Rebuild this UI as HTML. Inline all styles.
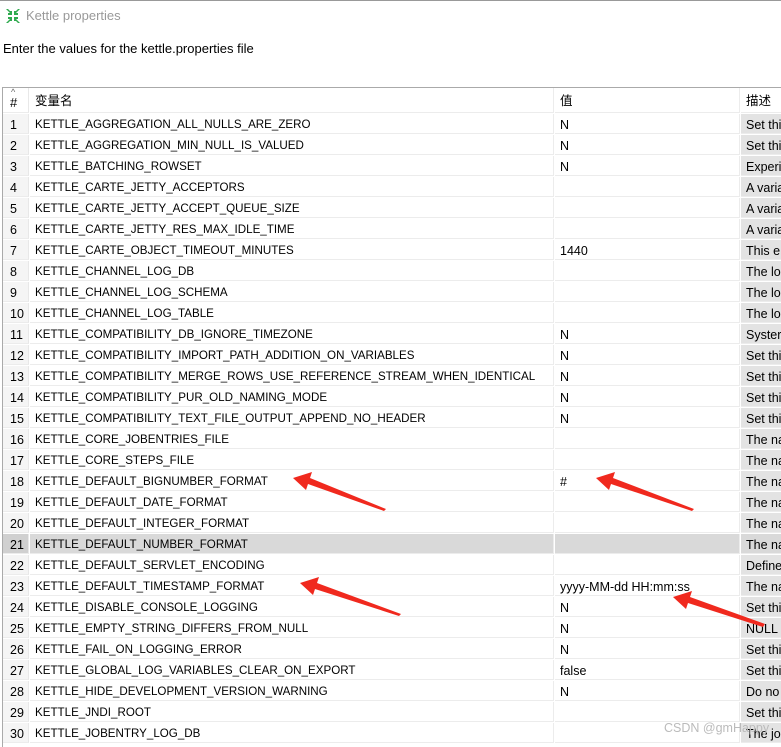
<!DOCTYPE html>
<html><head><meta charset="utf-8"><style>
body{margin:0;width:781px;height:746px;overflow:hidden;background:#fff;font-family:"Liberation Sans","Noto Sans CJK SC",sans-serif;position:relative}
.topline{position:absolute;left:0;top:0;width:781px;height:1px;background:#999}
.title{position:absolute;left:26px;top:8px;font-size:13px;color:#999}
.ico{position:absolute;left:5px;top:8px}
.sub{position:absolute;left:3px;top:41px;font-size:13px;color:#000}
.tbl{position:absolute;left:2px;top:87px;width:779px;height:659px;border-left:1px solid #aaa;border-top:1px solid #aaa;overflow:hidden}
.r{position:absolute;left:0;height:21px;width:779px;font-size:11.6px;line-height:22px;color:#000;white-space:nowrap}
.r div{position:absolute;top:0;height:20px;border-bottom:1px solid #ececec;overflow:hidden}
.c0{left:0;width:26px;background:#f5f5f5;border-right:1px solid #e8e8e8;padding-left:7px;box-sizing:border-box;font-size:12.5px}
.c1{left:27px;width:524px;padding-left:5px;box-sizing:border-box;border-right:1px solid #ececec}
.c2{left:552px;width:185px;padding-left:5px;box-sizing:border-box;border-right:1px solid #ececec;font-size:12.5px}
.c3{left:738px;width:50px;padding-left:5px;box-sizing:border-box;background:#e3e3e3;font-size:12.5px}
.sel div{background:#d9d9d9!important}
.sel .c0{background:#d0d0d0!important}
.wm{position:absolute;left:664px;top:721px;font-size:12.5px;color:#bbb}
</style></head><body>
<div class="topline"></div>
<svg class="ico" width="16" height="16" viewBox="0 0 16 16"><g fill="#2eaa4e"><path d="M1 1h2l4 4-2 0z"/><path d="M15 1h-2l-4 4 2 0z"/><path d="M1 15h2l4-4-2 0z"/><path d="M15 15h-2l-4-4 2 0z"/><rect x="5" y="3" width="2" height="4"/><rect x="3" y="5" width="4" height="2"/><rect x="9" y="3" width="2" height="4"/><rect x="9" y="5" width="4" height="2"/><rect x="5" y="9" width="2" height="4"/><rect x="3" y="9" width="4" height="2"/><rect x="9" y="9" width="2" height="4"/><rect x="9" y="9" width="4" height="2"/></g></svg>
<div class="title">Kettle properties</div>
<div class="sub">Enter the values for the kettle.properties file</div>
<div class="tbl">
<div class="r" style="top:0;height:26px;line-height:26px;font-size:12.5px"><div class="c0" style="height:25px;background:#fff;font-size:13px;padding-top:2px">#<span style="position:absolute;left:8px;top:-9px;font-size:9px;color:#666">^</span></div><div class="c1" style="height:25px;font-size:12.5px">变量名</div><div class="c2" style="height:25px">值</div><div class="c3" style="height:25px;background:#fff">描述</div></div>
<div class="r" style="top:26px"><div class="c0">1</div><div class="c1">KETTLE_AGGREGATION_ALL_NULLS_ARE_ZERO</div><div class="c2">N</div><div class="c3">Set thi</div></div>
<div class="r" style="top:47px"><div class="c0">2</div><div class="c1">KETTLE_AGGREGATION_MIN_NULL_IS_VALUED</div><div class="c2">N</div><div class="c3">Set thi</div></div>
<div class="r" style="top:68px"><div class="c0">3</div><div class="c1">KETTLE_BATCHING_ROWSET</div><div class="c2">N</div><div class="c3">Experi</div></div>
<div class="r" style="top:89px"><div class="c0">4</div><div class="c1">KETTLE_CARTE_JETTY_ACCEPTORS</div><div class="c2"></div><div class="c3">A varia</div></div>
<div class="r" style="top:110px"><div class="c0">5</div><div class="c1">KETTLE_CARTE_JETTY_ACCEPT_QUEUE_SIZE</div><div class="c2"></div><div class="c3">A varia</div></div>
<div class="r" style="top:131px"><div class="c0">6</div><div class="c1">KETTLE_CARTE_JETTY_RES_MAX_IDLE_TIME</div><div class="c2"></div><div class="c3">A varia</div></div>
<div class="r" style="top:152px"><div class="c0">7</div><div class="c1">KETTLE_CARTE_OBJECT_TIMEOUT_MINUTES</div><div class="c2">1440</div><div class="c3">This e</div></div>
<div class="r" style="top:173px"><div class="c0">8</div><div class="c1">KETTLE_CHANNEL_LOG_DB</div><div class="c2"></div><div class="c3">The lo</div></div>
<div class="r" style="top:194px"><div class="c0">9</div><div class="c1">KETTLE_CHANNEL_LOG_SCHEMA</div><div class="c2"></div><div class="c3">The lo</div></div>
<div class="r" style="top:215px"><div class="c0">10</div><div class="c1">KETTLE_CHANNEL_LOG_TABLE</div><div class="c2"></div><div class="c3">The lo</div></div>
<div class="r" style="top:236px"><div class="c0">11</div><div class="c1">KETTLE_COMPATIBILITY_DB_IGNORE_TIMEZONE</div><div class="c2">N</div><div class="c3">Syster</div></div>
<div class="r" style="top:257px"><div class="c0">12</div><div class="c1">KETTLE_COMPATIBILITY_IMPORT_PATH_ADDITION_ON_VARIABLES</div><div class="c2">N</div><div class="c3">Set thi</div></div>
<div class="r" style="top:278px"><div class="c0">13</div><div class="c1">KETTLE_COMPATIBILITY_MERGE_ROWS_USE_REFERENCE_STREAM_WHEN_IDENTICAL</div><div class="c2">N</div><div class="c3">Set thi</div></div>
<div class="r" style="top:299px"><div class="c0">14</div><div class="c1">KETTLE_COMPATIBILITY_PUR_OLD_NAMING_MODE</div><div class="c2">N</div><div class="c3">Set thi</div></div>
<div class="r" style="top:320px"><div class="c0">15</div><div class="c1">KETTLE_COMPATIBILITY_TEXT_FILE_OUTPUT_APPEND_NO_HEADER</div><div class="c2">N</div><div class="c3">Set thi</div></div>
<div class="r" style="top:341px"><div class="c0">16</div><div class="c1">KETTLE_CORE_JOBENTRIES_FILE</div><div class="c2"></div><div class="c3">The na</div></div>
<div class="r" style="top:362px"><div class="c0">17</div><div class="c1">KETTLE_CORE_STEPS_FILE</div><div class="c2"></div><div class="c3">The na</div></div>
<div class="r" style="top:383px"><div class="c0">18</div><div class="c1">KETTLE_DEFAULT_BIGNUMBER_FORMAT</div><div class="c2">#</div><div class="c3">The na</div></div>
<div class="r" style="top:404px"><div class="c0">19</div><div class="c1">KETTLE_DEFAULT_DATE_FORMAT</div><div class="c2"></div><div class="c3">The na</div></div>
<div class="r" style="top:425px"><div class="c0">20</div><div class="c1">KETTLE_DEFAULT_INTEGER_FORMAT</div><div class="c2"></div><div class="c3">The na</div></div>
<div class="r sel" style="top:446px"><div class="c0">21</div><div class="c1">KETTLE_DEFAULT_NUMBER_FORMAT</div><div class="c2"></div><div class="c3">The na</div></div>
<div class="r" style="top:467px"><div class="c0">22</div><div class="c1">KETTLE_DEFAULT_SERVLET_ENCODING</div><div class="c2"></div><div class="c3">Define</div></div>
<div class="r" style="top:488px"><div class="c0">23</div><div class="c1">KETTLE_DEFAULT_TIMESTAMP_FORMAT</div><div class="c2">yyyy-MM-dd HH:mm:ss</div><div class="c3">The na</div></div>
<div class="r" style="top:509px"><div class="c0">24</div><div class="c1">KETTLE_DISABLE_CONSOLE_LOGGING</div><div class="c2">N</div><div class="c3">Set thi</div></div>
<div class="r" style="top:530px"><div class="c0">25</div><div class="c1">KETTLE_EMPTY_STRING_DIFFERS_FROM_NULL</div><div class="c2">N</div><div class="c3">NULL</div></div>
<div class="r" style="top:551px"><div class="c0">26</div><div class="c1">KETTLE_FAIL_ON_LOGGING_ERROR</div><div class="c2">N</div><div class="c3">Set thi</div></div>
<div class="r" style="top:572px"><div class="c0">27</div><div class="c1">KETTLE_GLOBAL_LOG_VARIABLES_CLEAR_ON_EXPORT</div><div class="c2">false</div><div class="c3">Set thi</div></div>
<div class="r" style="top:593px"><div class="c0">28</div><div class="c1">KETTLE_HIDE_DEVELOPMENT_VERSION_WARNING</div><div class="c2">N</div><div class="c3">Do no</div></div>
<div class="r" style="top:614px"><div class="c0">29</div><div class="c1">KETTLE_JNDI_ROOT</div><div class="c2"></div><div class="c3">Set thi</div></div>
<div class="r" style="top:635px"><div class="c0">30</div><div class="c1">KETTLE_JOBENTRY_LOG_DB</div><div class="c2"></div><div class="c3">The jo</div></div>
</div>
<svg style="position:absolute;left:0;top:0" width="781" height="746">
<g fill="#f0291e">
<polygon points="293,478 312,472 310,478 386,509 384,511 308,484 306,490"/>
<polygon points="596,478 615,472 613,478 694,509 692,511 611,484 609,490"/>
<polygon points="300,583 319,577 317,583 401,614 399,616 315,589 313,595"/>
<polygon points="673,597 692,591 690,597 765,624 763,627 688,603 686,609"/>
</g>
</svg>
<div class="wm">CSDN @gmHappy</div>
</body></html>
